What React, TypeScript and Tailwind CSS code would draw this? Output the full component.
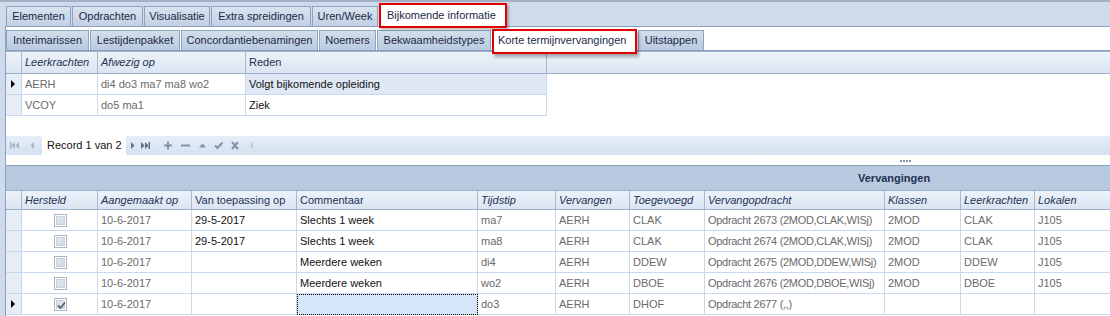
import React from "react";

const FONT = "font-['Liberation_Sans',Arial,sans-serif]";

function Tab1({ label, w, selected }: { label: string; w: number; selected?: boolean }) {
  if (selected) {
    return (
      <div
        className="relative z-10 -mb-[2px] h-[25px] border-2 border-[#e00000] bg-white flex items-center pl-[6px] text-[#1b2a44] shadow-[2px_2px_2px_rgba(0,0,0,0.25)]"
        style={{ width: w }}
      >
        {label}
      </div>
    );
  }
  return (
    <div
      className="h-[20px] mr-[1px] border border-b-0 border-[#8ea3c0] bg-gradient-to-b from-[#d9e3f0] to-[#c2d0e3] flex items-center justify-center text-[#1b2a44]"
      style={{ width: w }}
    >
      {label}
    </div>
  );
}

function Tab2({ label, w, selected }: { label: string; w: number; selected?: boolean }) {
  if (selected) {
    return (
      <div
        className="relative z-10 self-start mt-[2px] -mb-[4px] h-[25px] mr-[1px] border-2 border-[#e00000] bg-white flex items-center pl-[4px] pb-[3px] text-[#1b2a44] shadow-[2px_3px_3px_rgba(0,0,0,0.3)]"
        style={{ width: w }}
      >
        {label}
      </div>
    );
  }
  return (
    <div
      className="h-[20px] mr-[1px] border border-b-0 border-[#8ea3c0] bg-gradient-to-b from-[#d3deec] to-[#b9cae0] flex items-center justify-center text-[#1b2a44]"
      style={{ width: w }}
    >
      {label}
    </div>
  );
}

function Indicator() {
  return (
    <svg width="5" height="8" viewBox="0 0 5 8" className="ml-[5px]">
      <path d="M0 0 L4 4 L0 8 Z" fill="#000" />
    </svg>
  );
}

function HeaderCell({ w, label, italic }: { w: number; label?: string; italic?: boolean }) {
  return (
    <div
      className={`h-full flex items-center pl-[3px] border-r border-[#a7b8cf] text-[#1e3353] whitespace-nowrap shrink-0 ${italic ? "italic" : ""}`}
      style={{ width: w }}
    >
      {label}
    </div>
  );
}

type Cell = { t?: string; gray?: boolean; sel?: boolean; focus?: boolean; chk?: "on" | "off"; tight?: boolean };

function DataCell({ w, c }: { w: number; c: Cell }) {
  let cls = "h-full flex items-center pl-[3px] border-r border-b border-[#c8d8ee] shrink-0 whitespace-nowrap overflow-hidden ";
  if (c.sel) cls += "bg-[#dfe8f4] ";
  if (c.focus) cls += "bg-[#d6e6fa] outline-1 outline-dotted outline-black -outline-offset-1 ";
  if (c.tight) cls += "tracking-[-0.3px] ";
  cls += c.gray ? "text-[#6a6a6a]" : "text-[#111]";
  if (c.chk) {
    return (
      <div className={cls + " justify-center pl-0"} style={{ width: w }}>
        <CheckBox on={c.chk === "on"} />
      </div>
    );
  }
  return (
    <div className={cls} style={{ width: w }}>
      {c.t}
    </div>
  );
}

function CheckBox({ on }: { on: boolean }) {
  return (
    <div className="w-[13px] h-[13px] border border-[#a9b6c8] bg-white p-[1px] -ml-[2px]">
      <div className="w-full h-full bg-gradient-to-br from-[#e4e8ee] to-[#d2d8e1] border border-[#c9d0da] relative">
        {on && (
          <svg width="11" height="11" viewBox="0 0 11 11" className="absolute -left-[1px] -top-[1px]">
            <path d="M2 5.5 L4.5 8 L9 2.5" stroke="#5b6676" strokeWidth="1.8" fill="none" />
          </svg>
        )}
      </div>
    </div>
  );
}

const g1Cols = [16, 76, 148, 301];
const g1Head: [string, boolean][] = [
  ["", false],
  ["Leerkrachten", true],
  ["Afwezig op", true],
  ["Reden", false],
];
const g1Rows: { ind?: boolean; cells: Cell[] }[] = [
  {
    ind: true,
    cells: [{ t: "AERH", gray: true }, { t: "di4 do3 ma7 ma8 wo2", gray: true }, { t: "Volgt bijkomende opleiding", sel: true }],
  },
  {
    cells: [{ t: "VCOY", gray: true }, { t: "do5 ma1", gray: true }, { t: "Ziek" }],
  },
];

const g2Cols = [16, 76, 94, 105, 181, 78, 74, 75, 180, 76, 74, 80];
const g2Head: [string, boolean][] = [
  ["", false],
  ["Hersteld", true],
  ["Aangemaakt op", true],
  ["Van toepassing op", false],
  ["Commentaar", false],
  ["Tijdstip", true],
  ["Vervangen", true],
  ["Toegevoegd", true],
  ["Vervangopdracht", true],
  ["Klassen", true],
  ["Leerkrachten", true],
  ["Lokalen", true],
];

function r2(
  chk: "on" | "off",
  van: string,
  com: string,
  tijd: string,
  toe: string,
  opd: string,
  kl: string,
  lk: string,
  lo: string,
  focus?: boolean
): Cell[] {
  return [
    { chk },
    { t: "10-6-2017", gray: true },
    { t: van },
    { t: com, focus },
    { t: tijd, gray: true },
    { t: "AERH", gray: true },
    { t: toe, gray: true },
    { t: opd, gray: true, tight: true },
    { t: kl, gray: true },
    { t: lk, gray: true },
    { t: lo, gray: true },
  ];
}

const g2Rows: { ind?: boolean; cells: Cell[] }[] = [
  { cells: r2("off", "29-5-2017", "Slechts 1 week", "ma7", "CLAK", "Opdracht 2673 (2MOD,CLAK,WISj)", "2MOD", "CLAK", "J105") },
  { cells: r2("off", "29-5-2017", "Slechts 1 week", "ma8", "CLAK", "Opdracht 2674 (2MOD,CLAK,WISj)", "2MOD", "CLAK", "J105") },
  { cells: r2("off", "", "Meerdere weken", "di4", "DDEW", "Opdracht 2675 (2MOD,DDEW,WISj)", "2MOD", "DDEW", "J105") },
  { cells: r2("off", "", "Meerdere weken", "wo2", "DBOE", "Opdracht 2676 (2MOD,DBOE,WISj)", "2MOD", "DBOE", "J105") },
  { ind: true, cells: r2("on", "", "", "do3", "DHOF", "Opdracht 2677 (,,)", "", "", "", true) },
];

function NavIcon({ children, w = 10, ml }: { children: React.ReactNode; w?: number; ml: number }) {
  return (
    <svg width={w} height="9" viewBox={`0 0 ${w} 9`} className="shrink-0" style={{ marginLeft: ml }}>
      {children}
    </svg>
  );
}

function Navigator() {
  const light = "#a9b4c4";
  const dark = "#5d6e88";
  const mid = "#8292aa";
  return (
    <div className="h-[19px] shrink-0 flex items-center bg-gradient-to-b from-[#e6eef8] to-[#d5e1f0]">
      <NavIcon w={9} ml={4}>
        <rect x="0" y="1" width="1.5" height="7" fill={light} />
        <path d="M5 1 L1.5 4.5 L5 8 Z M9 1 L5.5 4.5 L9 8 Z" fill={light} />
      </NavIcon>
      <NavIcon w={4} ml={11}>
        <path d="M4 1 L0.5 4.5 L4 8 Z" fill={light} />
      </NavIcon>
      <div className="w-[84px] h-full bg-white flex items-center pl-[5px] text-[#111] ml-[8px] shrink-0">Record 1 van 2</div>
      <NavIcon w={4} ml={5}>
        <path d="M0 1 L3.5 4.5 L0 8 Z" fill={dark} />
      </NavIcon>
      <NavIcon w={9} ml={6}>
        <path d="M0 1 L3.5 4.5 L0 8 Z M4 1 L7.5 4.5 L4 8 Z" fill={dark} />
        <rect x="7.5" y="1" width="1.5" height="7" fill={dark} />
      </NavIcon>
      <NavIcon w={8} ml={14}>
        <path d="M4 0.5 V8.5 M0 4.5 H8" stroke={mid} strokeWidth="2" />
      </NavIcon>
      <NavIcon w={9} ml={9}>
        <path d="M0 4.5 H9" stroke={mid} strokeWidth="2" />
      </NavIcon>
      <NavIcon w={7} ml={9}>
        <path d="M0 6.5 L3.5 2.5 L7 6.5 Z" fill={mid} />
      </NavIcon>
      <NavIcon w={9} ml={8}>
        <path d="M1 4.5 L3.5 7 L8.5 1.5" stroke={mid} strokeWidth="2" fill="none" />
      </NavIcon>
      <NavIcon w={8} ml={8}>
        <path d="M1 1 L7 8 M7 1 L1 8" stroke={mid} strokeWidth="2" />
      </NavIcon>
      <NavIcon w={4} ml={10}>
        <path d="M4 1 L0.5 4.5 L4 8 Z" fill="#c3ccd9" />
      </NavIcon>
    </div>
  );
}

export default function App() {
  return (
    <div className={`${FONT} text-[11px] leading-none w-[1110px] h-[316px] overflow-hidden bg-[#cfdbeb] flex flex-col`}>
      {/* top tabs */}
      <div className="h-[26px] shrink-0 border-t-2 border-[#a4b1c4] flex items-end pl-[6px]">
        <Tab1 label="Elementen" w={65} />
        <Tab1 label="Opdrachten" w={71} />
        <Tab1 label="Visualisatie" w={66} />
        <Tab1 label="Extra spreidingen" w={100} />
        <Tab1 label="Uren/Week" w={66} />
        <Tab1 label="Bijkomende informatie" w={128} selected />
      </div>
      {/* content panel */}
      <div className="flex-1 ml-[5px] bg-white border-l border-t border-[#8ba1bf] flex flex-col min-h-0">
        {/* second tab row */}
        <div className="h-[24px] shrink-0 flex items-end border-b border-[#8ba1bf]">
          <Tab2 label="Interimarissen" w={83} />
          <Tab2 label="Lestijdenpakket" w={90} />
          <Tab2 label="Concordantiebenamingen" w={137} />
          <Tab2 label="Noemers" w={57} />
          <Tab2 label="Bekwaamheidstypes" w={114} />
          <Tab2 label="Korte termijnvervangingen" w={145} selected />
          <Tab2 label="Uitstappen" w={66} />
        </div>
        {/* grid 1 */}
        <div className="h-[23px] shrink-0 flex border-t border-b border-[#9cb0cb] bg-gradient-to-b from-[#eef3fa] to-[#dae4f1]">
          {g1Head.map(([l, it], i) => (
            <HeaderCell key={i} w={g1Cols[i]} label={l} italic={it} />
          ))}
        </div>
        {g1Rows.map((row, ri) => (
          <div key={ri} className="h-[21px] shrink-0 flex">
            <div className="w-[16px] h-full shrink-0 flex items-center border-r border-b border-[#c8d8ee] bg-[#e6edf7]">
              {row.ind && <Indicator />}
            </div>
            {row.cells.map((c, ci) => (
              <DataCell key={ci} w={g1Cols[ci + 1]} c={c} />
            ))}
          </div>
        ))}
        <div className="h-[20px] shrink-0" />
        <Navigator />
        {/* splitter */}
        <div className="h-[11px] shrink-0 flex items-center justify-start pl-[894px] border-b border-[#8ba1bf]">
          <div className="flex gap-[1px] pt-[1px]">
            <div className="w-[2px] h-[2px] bg-[#7f93b0]" />
            <div className="w-[2px] h-[2px] bg-[#7f93b0]" />
            <div className="w-[2px] h-[2px] bg-[#7f93b0]" />
            <div className="w-[2px] h-[2px] bg-[#7f93b0]" />
          </div>
        </div>
        {/* grid 2 */}
        <div className="h-[24px] shrink-0 bg-[#b8c9df] flex items-center pl-[852px] font-bold text-[#1e3353] text-[11px]">
          Vervangingen
        </div>
        <div className="h-[20px] shrink-0 flex border-t border-b border-[#9cb0cb] bg-gradient-to-b from-[#eef3fa] to-[#dae4f1]">
          {g2Head.map(([l, it], i) => (
            <HeaderCell key={i} w={g2Cols[i]} label={l} italic={it} />
          ))}
        </div>
        {g2Rows.map((row, ri) => (
          <div key={ri} className="h-[21px] shrink-0 flex">
            <div className="w-[16px] h-full shrink-0 flex items-center border-r border-b border-[#c8d8ee] bg-[#e6edf7]">
              {row.ind && <Indicator />}
            </div>
            {row.cells.map((c, ci) => (
              <DataCell key={ci} w={g2Cols[ci + 1]} c={c} />
            ))}
          </div>
        ))}
      </div>
    </div>
  );
}
